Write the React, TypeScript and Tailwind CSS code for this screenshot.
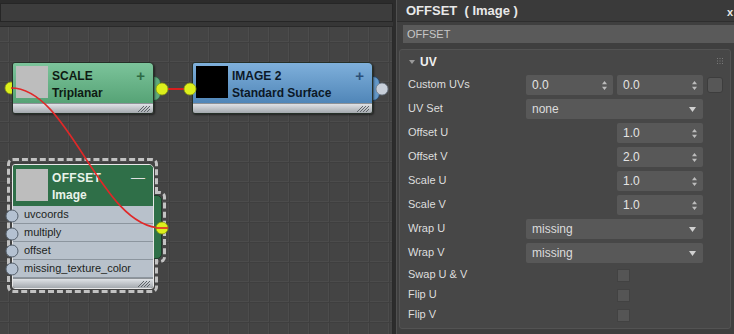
import React from 'react'

const font = "font-['Liberation_Sans',Arial,sans-serif]"

function SpinArrows() {
  return (
    <svg width="5" height="9" viewBox="0 0 5 9" className="shrink-0">
      <path d="M2.5 0L5 3.2H0z M2.5 9L0 5.8h5z" fill="#bcbcbc" />
    </svg>
  )
}

function DropArrow() {
  return (
    <svg width="7" height="5" viewBox="0 0 7 5" className="shrink-0">
      <path d="M0 0H7L3.5 5z" fill="#d0d0d0" />
    </svg>
  )
}

function Spin({ value, className = '' }: { value: string; className?: string }) {
  return (
    <div className={`h-5 bg-[#585858] rounded-[2px] flex items-center pl-[6px] pr-[6px] text-[12px] text-[#e4e4e4] ${className}`}>
      <span className="flex-1">{value}</span>
      <SpinArrows />
    </div>
  )
}

function Drop({ value }: { value: string }) {
  return (
    <div className="h-5 w-[177px] bg-[#585858] rounded-[2px] flex items-center pl-[6px] pr-[7px] text-[12px] text-[#dcdcdc]">
      <span className="flex-1">{value}</span>
      <DropArrow />
    </div>
  )
}

function Row({ label, children, h = 'h-6' }: { label: string; children: React.ReactNode; h?: string }) {
  return (
    <div className={`flex items-center ${h}`}>
      <div className="w-[118px] text-[11px] text-[#dedede] -mt-[2px]">{label}</div>
      <div className="flex items-center">{children}</div>
    </div>
  )
}

function Check() {
  return <div className="ml-[91px] w-[13px] h-[13px] bg-[#555555] border border-[#424242]" />
}

function Footer() {
  return (
    <div className="relative h-[10px] bg-linear-to-b from-[#dfe2e6] to-[#a4a9ae] border-t border-[#8d9297]">
      <svg width="12" height="6" viewBox="0 0 12 6" className="absolute right-[3px] bottom-[1px]">
        <path d="M0 6L6 0 M3 6L9 0 M6 6L12 0 M9 6L12 3" stroke="#5e6368" strokeWidth="1" />
      </svg>
    </div>
  )
}

function Node({
  left,
  top,
  width,
  thumb,
  title,
  sub,
  header,
  text,
  mark,
  markColor,
}: {
  left: string
  top: string
  width: string
  thumb: string
  title: string
  sub: string
  header: string
  text: string
  mark: string
  markColor: string
}) {
  return (
    <div className={`absolute ${left} ${top} ${width} rounded-tr-[5px] rounded-[3px] overflow-hidden border border-[#263028] shadow-[1px_1px_2px_rgba(0,0,0,0.5)]`}>
      <div className={`relative h-[40px] flex ${header}`}>
        <div className={`ml-[3px] mt-[3px] w-[32px] h-[32px] ${thumb}`} />
        <div className={`ml-[4px] pt-[5px] text-[12px] font-bold leading-[17px] ${text}`}>
          <div>{title}</div>
          <div>{sub}</div>
        </div>
        <div className={`absolute right-[8px] top-[2px] text-[15px] font-bold ${markColor}`}>{mark}</div>
      </div>
      <Footer />
    </div>
  )
}

function Canvas() {
  const rows = ['uvcoords', 'multiply', 'offset', 'missing_texture_color']
  return (
    <div className="relative flex-1 bg-[#444444] border-t border-r border-[#2a2a2a] overflow-hidden">
      <svg className="absolute inset-0" width="100%" height="100%">
        <defs>
          <pattern id="grid" x="8" y="14" width="20" height="20" patternUnits="userSpaceOnUse">
            <path d="M0 0.5H20 M0.5 0V20" stroke="#4c4c4c" strokeWidth="1" />
            <path d="M0 1.5H20 M1.5 0V20" stroke="#3f3f3f" strokeWidth="1" />
          </pattern>
        </defs>
        <rect width="100%" height="100%" fill="url(#grid)" />
        {/* port sitting behind SCALE node */}
        <circle cx="11" cy="61" r="6" fill="#dcef1c" stroke="#8a9a10" strokeWidth="0.8" />
      </svg>

      {/* SCALE output tab */}
      <div className="absolute left-[150px] top-[49px] w-[11px] h-[25px] rounded-r-[7px] bg-[#5ea87c] border border-[#2f5a40]" />
      <Node
        left="left-[12px]"
        top="top-[35px]"
        width="w-[142px]"
        thumb="bg-[#bdbdbd]"
        title="SCALE"
        sub="Triplanar"
        header="bg-linear-to-b from-[#7cc49b] to-[#56a376]"
        text="text-[#0e1a12]"
        mark="+"
        markColor="text-[#2d6a44]"
      />

      {/* IMAGE 2 output tab */}
      <div className="absolute left-[369px] top-[49px] w-[11px] h-[25px] rounded-r-[7px] bg-[#6398c8] border border-[#2a4868]" />
      <Node
        left="left-[192px]"
        top="top-[35px]"
        width="w-[181px]"
        thumb="bg-black"
        title="IMAGE 2"
        sub="Standard Surface"
        header="bg-linear-to-b from-[#7fb0db] to-[#5086b8]"
        text="text-[#0c1827]"
        mark="+"
        markColor="text-[#2b4f78]"
      />

      {/* OFFSET selection outline */}
      <div className="absolute left-[7px] top-[131px] w-[151px] h-[135px] rounded-[6px] border-[3px] border-dashed border-[#c2c2c2]" />
      <div className="absolute left-[155px] top-[164px] w-[11px] h-[72px] rounded-r-[6px] border-[3px] border-l-0 border-dashed border-[#c2c2c2]" />

      {/* OFFSET output tab */}
      <div className="absolute left-[150px] top-[168px] w-[12px] h-[64px] rounded-r-[5px] bg-[#2f7048] border border-[#1c3a28]" />
      <div className="absolute left-[12px] top-[137px] w-[142px] rounded-tr-[5px] rounded-[3px] overflow-hidden border border-[#e8e8e8]">
        <div className="relative h-[41px] flex bg-[#2f6f48]">
          <div className="ml-[3px] mt-[4px] w-[32px] h-[32px] bg-[#bdbdbd]" />
          <div className="ml-[4px] pt-[5px] text-[12px] font-bold leading-[17px] text-[#e9f3ea]">
            <div className="tracking-[0.3px]">OFFSET</div>
            <div>Image</div>
          </div>
          <div className="absolute right-[8px] top-[2px] text-[14px] text-[#e0e0e0]">—</div>
        </div>
        {rows.map((r) => (
          <div key={r} className="h-[18px] bg-[#b8c1cb] border-b border-[#8c959e] pl-[11px] text-[11px] leading-[17px] text-[#1c1f22]">
            {r}
          </div>
        ))}
        <Footer />
      </div>

      <svg className="absolute inset-0" width="100%" height="100%">
        {/* ports on OFFSET inputs */}
        {[189, 207, 224, 242].map((y) => (
          <circle key={y} cx="12" cy={y} r="6" fill="#b4c1d1" stroke="#55606c" strokeWidth="1" />
        ))}
        {/* wires */}
        <path d="M11 61 C 70 61, 100 201, 162 201" stroke="#e02828" strokeWidth="1.6" fill="none" />
        <path d="M168 62 H186" stroke="#d81e1e" strokeWidth="2" />
        {/* ports */}
        <circle cx="162" cy="62" r="6" fill="#dcef1c" stroke="#8a9a10" strokeWidth="0.8" />
        <circle cx="190" cy="62" r="6" fill="#dcef1c" stroke="#8a9a10" strokeWidth="0.8" />
        <circle cx="382" cy="62" r="6" fill="#c8cfd9" stroke="#6b7684" strokeWidth="0.8" />
        <circle cx="162" cy="201" r="6" fill="#dcef1c" stroke="#8a9a10" strokeWidth="0.8" />
        <path d="M156 201 H168" stroke="#e02828" strokeWidth="1.6" />
      </svg>
    </div>
  )
}

export default function App() {
  return (
    <div className={`w-[734px] h-[334px] flex bg-[#2c2c2c] overflow-hidden ${font}`}>
      {/* Node editor */}
      <div className="w-[393px] flex flex-col pt-[3px]">
        <div className="h-[19px] bg-[#3d3d3d] border border-[#262626]" />
        <div className="h-[4px] bg-[#363636]" />
        <Canvas />
      </div>

      {/* Property panel */}
      <div className="ml-[3px] flex-1 flex flex-col bg-[#3f3f3f] border-l border-[#505050]">
        <div className="relative h-[22px] bg-[#3a3a3a] border-b border-[#2e2e2e] pl-[9px] flex items-center text-[13px] font-bold text-[#e8e8e8]">
          OFFSET&nbsp; ( Image )
          <span className="absolute right-[1px] top-[4px] text-[11px]">x</span>
        </div>
        <div className="pl-[6px] pt-[3px]">
          <div className="h-[18px] bg-[#5a5a5a] pl-[4px] text-[11px] leading-[18px] text-[#c6c6c6]">OFFSET</div>
        </div>
        <div className="ml-[2px] mr-[3px] mt-[6px] h-[280px] bg-[#474747] border border-[#535353] rounded-[3px] pl-[8px]">
          <div className="relative h-[23px] flex items-center">
            <svg width="6" height="4" viewBox="0 0 6 4" className="ml-[1px]">
              <path d="M0 0H6L3 4z" fill="#9a9a9a" />
            </svg>
            <span className="ml-[5px] text-[12px] font-bold text-[#f0f0f0]">UV</span>
            <svg width="6" height="6" viewBox="0 0 6 6" className="absolute right-[7px] top-[8px]">
              {[0.5, 3, 5.5].map((x) => [0.5, 3, 5.5].map((y) => <rect key={`${x}-${y}`} x={x - 0.5} y={y - 0.5} width="1" height="1" fill="#7a7a7a" />))}
            </svg>
          </div>
          <Row label="Custom UVs">
            <Spin value="0.0" className="w-[87px]" />
            <Spin value="0.0" className="ml-[4px] w-[86px]" />
            <div className="ml-[4px] w-[16px] h-[16px] rounded-[3px] bg-[#575757] border border-[#3d3d3d]" />
          </Row>
          <Row label="UV Set">
            <Drop value="none" />
          </Row>
          <Row label="Offset U">
            <Spin value="1.0" className="ml-[91px] w-[86px]" />
          </Row>
          <Row label="Offset V">
            <Spin value="2.0" className="ml-[91px] w-[86px]" />
          </Row>
          <Row label="Scale U">
            <Spin value="1.0" className="ml-[91px] w-[86px]" />
          </Row>
          <Row label="Scale V">
            <Spin value="1.0" className="ml-[91px] w-[86px]" />
          </Row>
          <Row label="Wrap U">
            <Drop value="missing" />
          </Row>
          <Row label="Wrap V">
            <Drop value="missing" />
          </Row>
          <Row label="Swap U & V" h="h-5">
            <Check />
          </Row>
          <Row label="Flip U" h="h-5">
            <Check />
          </Row>
          <Row label="Flip V" h="h-5">
            <Check />
          </Row>
        </div>
      </div>
    </div>
  )
}
